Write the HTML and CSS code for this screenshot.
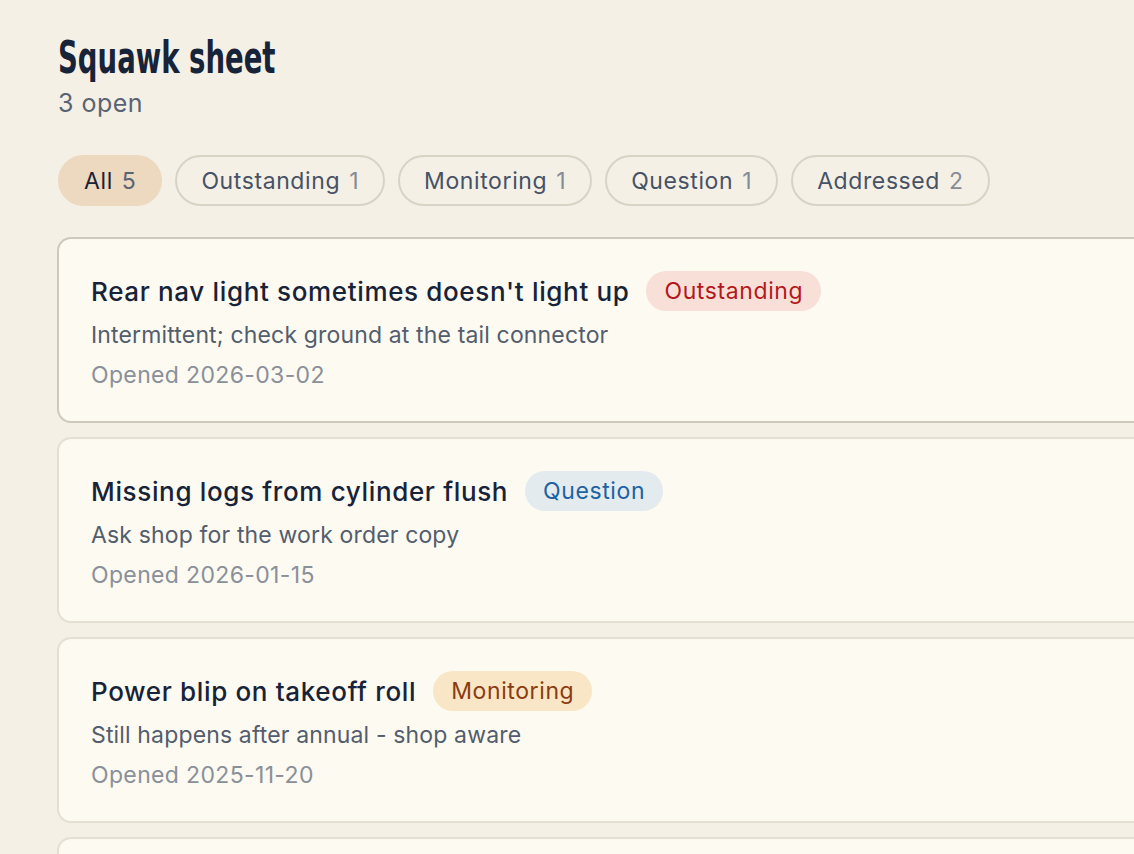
FILE: index.html
```html
<!DOCTYPE html>
<html lang="en">
<head>
<meta charset="utf-8">
<title>Squawk sheet</title>
<link rel="stylesheet" href="styles.css">
</head>
<body>
<main class="page">
  <header class="head">
    <h1 class="title"><span class="title-text">Squawk sheet</span></h1>
    <p class="subtitle">3 open</p>
  </header>
  <nav class="filters">
    <button class="pill active">All<span class="count">5</span></button>
    <button class="pill">Outstanding<span class="count">1</span></button>
    <button class="pill">Monitoring<span class="count">1</span></button>
    <button class="pill">Question<span class="count">1</span></button>
    <button class="pill">Addressed<span class="count">2</span></button>
  </nav>
  <section class="list">
    <article class="card selected">
      <div class="card-head">
        <h2 class="card-title">Rear nav light sometimes doesn't light up</h2>
        <span class="badge outstanding">Outstanding</span>
      </div>
      <p class="desc">Intermittent; check ground at the tail connector</p>
      <p class="date">Opened 2026-03-02</p>
    </article>
    <article class="card">
      <div class="card-head">
        <h2 class="card-title">Missing logs from cylinder flush</h2>
        <span class="badge question">Question</span>
      </div>
      <p class="desc">Ask shop for the work order copy</p>
      <p class="date">Opened 2026-01-15</p>
    </article>
    <article class="card">
      <div class="card-head">
        <h2 class="card-title">Power blip on takeoff roll</h2>
        <span class="badge monitoring">Monitoring</span>
      </div>
      <p class="desc">Still happens after annual - shop aware</p>
      <p class="date">Opened 2025-11-20</p>
    </article>
    <article class="card last"></article>
  </section>
</main>
</body>
</html>
```

FILE: styles.css
```css
* { box-sizing: border-box; }
html, body { margin: 0; padding: 0; }
body {
  background: #f4f0e5;
  font-family: Inter, "Noto Sans", sans-serif;
  color: #172338;
  height: 854px;
  overflow: hidden;
}
.page {
  padding: 30px 0 0 58px;
  width: 1200px;
}
.head { margin: 0; }
.title {
  margin: 0;
  font-family: "DejaVu Sans Condensed", "DejaVu Sans", sans-serif;
  font-weight: 700;
  font-size: 45px;
  line-height: 56px;
  color: #172338;
}
.title-text {
  display: inline-block;
  transform: scaleX(0.68);
  transform-origin: left center;
}
.subtitle {
  margin: 0;
  font-size: 25px;
  line-height: 34px;
  letter-spacing: 0.5px;
  color: #5a6373;
}
.filters {
  display: flex;
  gap: 13px;
  margin-top: 35px;
}
.pill {
  font-family: inherit;
  height: 51px;
  padding: 0 24px;
  border-radius: 26px;
  border: 2px solid #d9d3c6;
  background: transparent;
  font-size: 23px;
  letter-spacing: 0.6px;
  color: #475266;
  display: flex;
  align-items: center;
  gap: 9px;
}
.pill .count { color: #868c96; }
.pill.active {
  background: #ecd9bf;
  border-color: #ecd9bf;
  color: #172338;
}
.pill.active .count { color: #5a6373; }
.list {
  margin-top: 31px;
  margin-left: -1px;
  display: flex;
  flex-direction: column;
  gap: 14px;
}
.card {
  height: 186px;
  flex: none;
  background: #fcfaf1;
  border: 2px solid #e3dfd4;
  border-radius: 14px;
  padding: 32px 32px;
}
.card.selected { border-color: #cdc9be; }
.card-head {
  display: flex;
  align-items: center;
  gap: 17px;
  height: 40px;
}
.card-title {
  margin: 0;
  font-size: 26px;
  font-weight: 500;
  letter-spacing: 0.65px;
  color: #172338;
}
.badge {
  height: 40px;
  padding: 0 18px;
  border-radius: 20px;
  font-size: 23px;
  letter-spacing: 0.6px;
  display: flex;
  align-items: center;
}
.badge.outstanding { background: #f8e0d9; color: #b3181c; }
.badge.question { background: #e3ebee; color: #1d62a3; }
.badge.monitoring { background: #f9e6c6; color: #8b3b0f; }
.desc {
  margin: 4px 0 0;
  font-size: 23px;
  line-height: 40px;
  letter-spacing: 0.15px;
  color: #535d6d;
}
.date {
  margin: 0;
  font-size: 23px;
  line-height: 40px;
  letter-spacing: 0.35px;
  color: #8a9099;
}
```
